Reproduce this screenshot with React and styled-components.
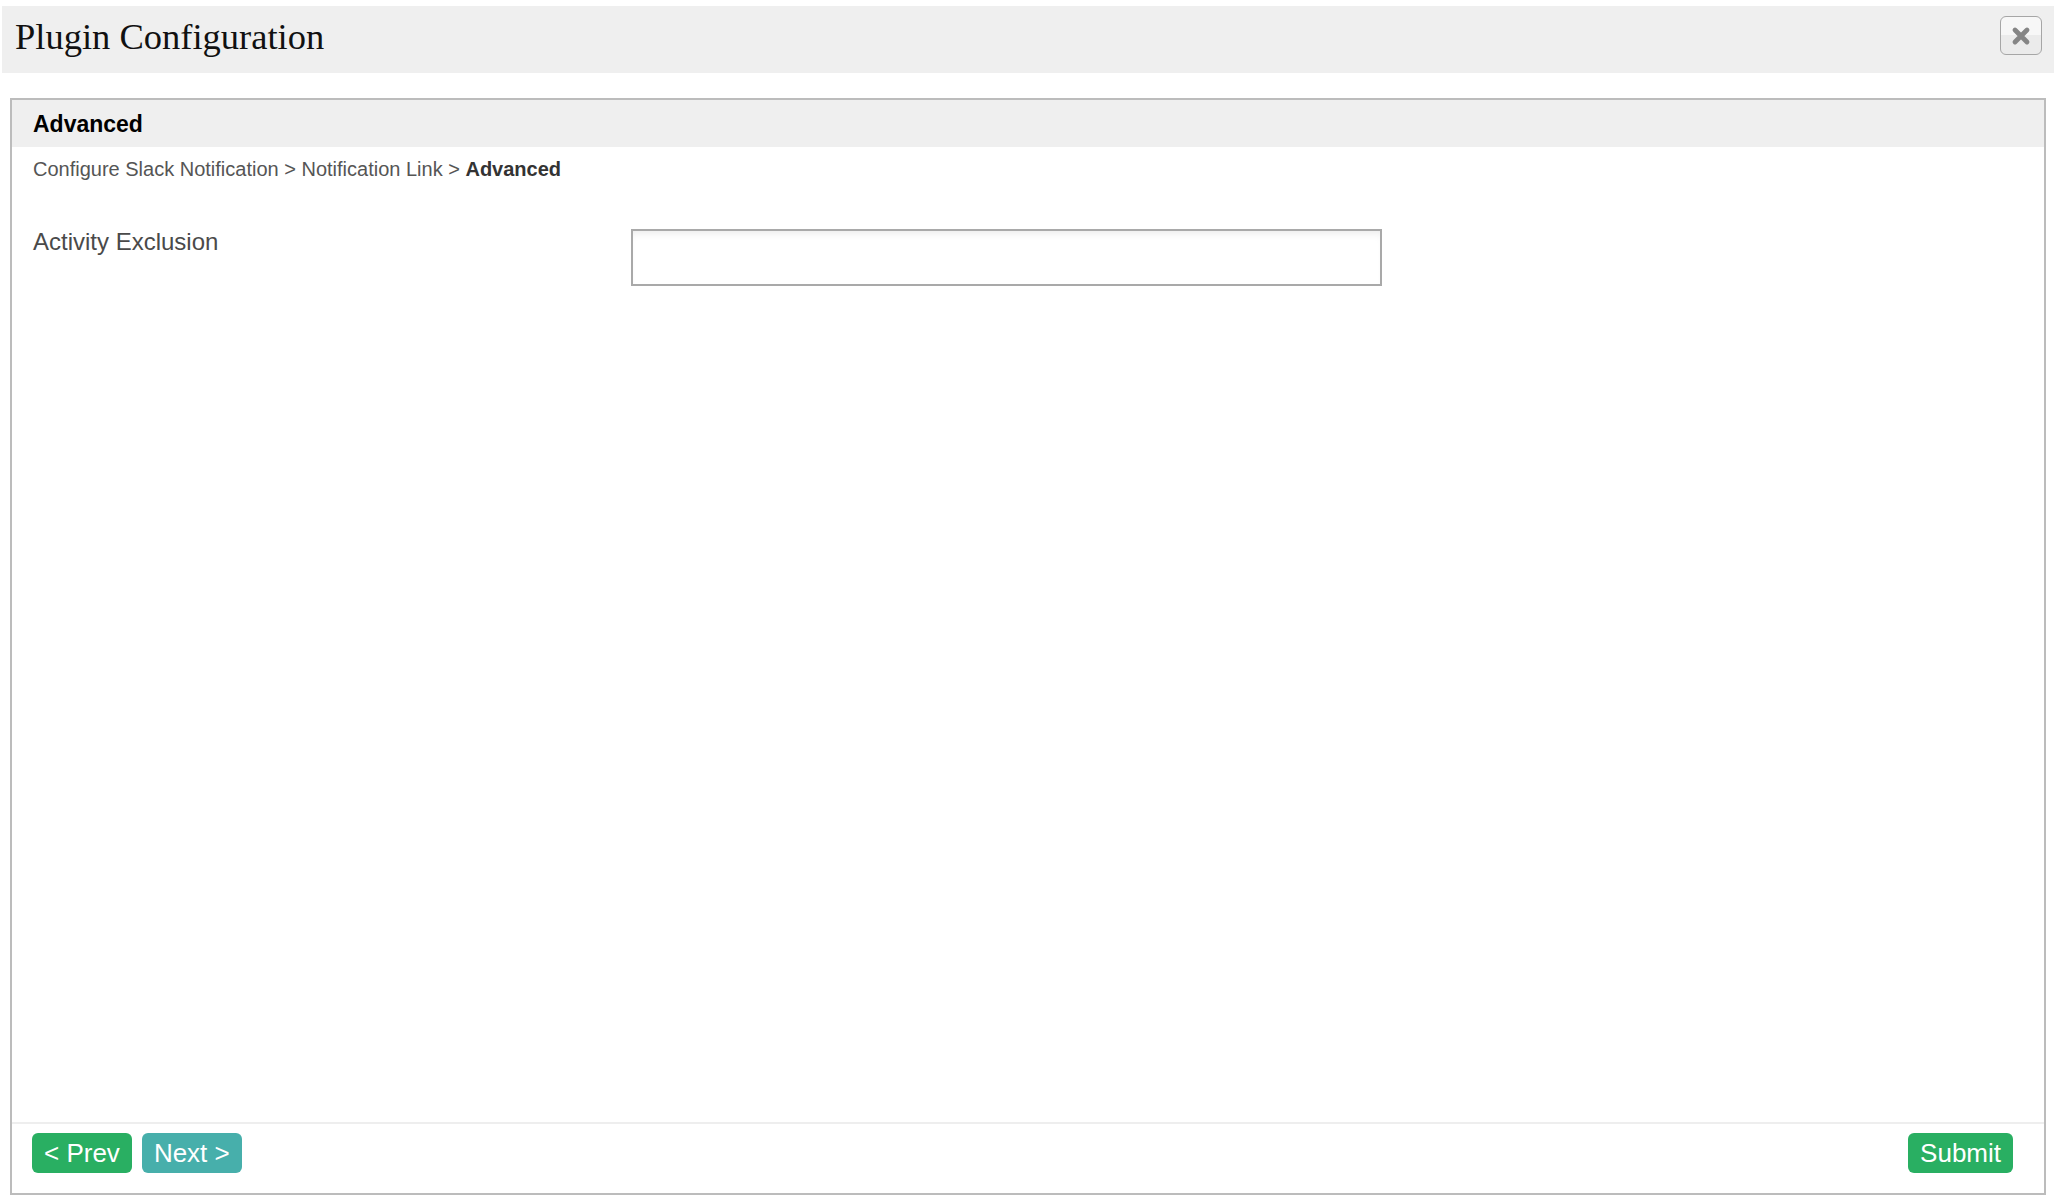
import styled, { createGlobalStyle } from 'styled-components'

const GlobalStyle = createGlobalStyle`
  html, body {
    margin: 0;
    padding: 0;
    background: #ffffff;
  }
  * {
    box-sizing: border-box;
  }
`

const Page = styled.div`
  display: flex;
  flex-direction: column;
  height: 100vh;
  padding: 6px 0 7px 2px;
  font-family: "Liberation Sans", Arial, sans-serif;
`

const TitleBar = styled.div`
  display: flex;
  align-items: flex-start;
  justify-content: space-between;
  height: 67px;
  padding: 0 12px 4px 13px;
  background: #efefef;
`

const Title = styled.h1`
  margin: 0;
  font-family: "Liberation Serif", Georgia, serif;
  font-weight: normal;
  font-size: 36.5px;
  line-height: 62px;
  color: #111111;
`

const CloseButton = styled.button`
  display: flex;
  align-items: center;
  justify-content: center;
  width: 42px;
  height: 39px;
  margin-top: 10px;
  padding: 0;
  border: 1.5px solid #a6a6a6;
  border-radius: 6px;
  background: linear-gradient(to bottom, #f7f7f7 0%, #f7f7f7 50%, #ebebeb 50%, #ebebeb 100%);
  cursor: pointer;
`

const Panel = styled.div`
  flex: 1;
  display: flex;
  flex-direction: column;
  margin: 25px 8px 0 8px;
  border: 2px solid #bcbcbc;
`

const SectionHeader = styled.div`
  height: 47px;
  padding-left: 21px;
  background: #efefef;
  font-size: 23px;
  font-weight: bold;
  line-height: 49px;
  color: #000000;
`

const Body = styled.div`
  flex: 1;
  padding: 10px 21px 0;
`

const Crumbs = styled.div`
  font-size: 20px;
  line-height: 24px;
  color: #555555;

  b {
    color: #333333;
  }
`

const FieldRow = styled.div`
  display: flex;
  align-items: flex-start;
  margin-top: 47px;
`

const Label = styled.label`
  width: 598px;
  font-size: 24px;
  line-height: 28px;
  color: #4a4a4a;
`

const TextInput = styled.input`
  width: 751px;
  height: 57px;
  margin-top: 1px;
  border: 2px solid #a9a9a9;
  border-radius: 0;
  background: #ffffff;
  box-shadow: inset 0 7px 8px -5px rgba(0, 0, 0, 0.09);
  outline: none;
  font-size: 20px;
`

const Footer = styled.div`
  display: flex;
  align-items: center;
  gap: 10px;
  padding: 9px 31px 20px 20px;
  border-top: 2px solid #eeeeee;
`

const Spacer = styled.div`
  flex: 1;
`

const ActionButton = styled.button`
  height: 40px;
  padding: 0 12px;
  border: none;
  border-radius: 6px;
  background: ${({ tone }) => (tone === 'teal' ? '#47afab' : '#29af62')};
  font-family: "Liberation Sans", Arial, sans-serif;
  font-size: 26px;
  line-height: 40px;
  color: #ffffff;
  cursor: pointer;
`

const CloseIcon = () => (
  <svg width="20" height="20" viewBox="0 0 20 20">
    <path d="M4 4 L16 16 M16 4 L4 16" stroke="#858585" strokeWidth="4.8" strokeLinecap="round" />
  </svg>
)

export default function App() {
  return (
    <>
      <GlobalStyle />
      <Page>
        <TitleBar>
          <Title>Plugin Configuration</Title>
          <CloseButton aria-label="close">
            <CloseIcon />
          </CloseButton>
        </TitleBar>
        <Panel>
          <SectionHeader>Advanced</SectionHeader>
          <Body>
            <Crumbs>
              Configure Slack Notification &gt; Notification Link &gt; <b>Advanced</b>
            </Crumbs>
            <FieldRow>
              <Label>Activity Exclusion</Label>
              <TextInput type="text" />
            </FieldRow>
          </Body>
          <Footer>
            <ActionButton>&lt; Prev</ActionButton>
            <ActionButton tone="teal">Next &gt;</ActionButton>
            <Spacer />
            <ActionButton>Submit</ActionButton>
          </Footer>
        </Panel>
      </Page>
    </>
  )
}
